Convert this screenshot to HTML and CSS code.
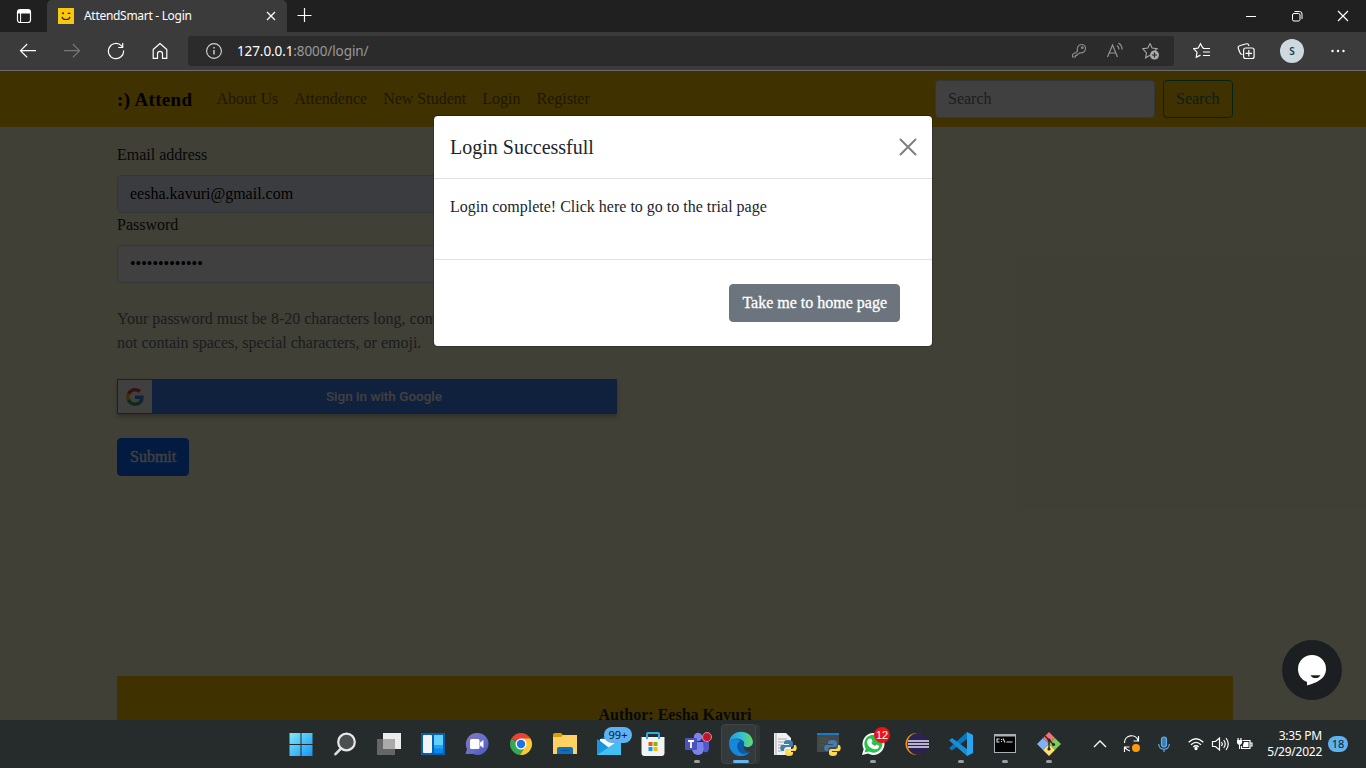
FILE: index.html
```html
<!DOCTYPE html>
<html lang="en">
<head>
<meta charset="utf-8">
<title>AttendSmart - Login</title>
<link rel="stylesheet" href="styles.css">
</head>
<body>
<div class="desktop">
  <header class="tabstrip">
    <div class="tab-actions"><svg width="16" height="16" viewBox="0 0 16 16"><rect x="1.5" y="1.5" width="13" height="13" rx="2.5" fill="none" stroke="#fff" stroke-width="1.2"/><path d="M2 2h12v3.500H2z" fill="#fff"/><path d="M4.600 5v9.500" stroke="#fff"/></svg></div>
    <div class="tab">
      <svg width="16" height="16" viewBox="0 0 16 16"><path d="M0 0h16v16H0z" fill="#f9c80e"/><circle cx="5" cy="5.300" r="1" fill="#302700"/><path d="M9.800 5.300h2.500M4 8.800c.8 3.600 7.200 3.600 8 0" fill="none" stroke="#302700" stroke-width="1.200"/></svg>
      <span class="tab-title">AttendSmart - Login</span>
      <svg class="tab-close" width="10" height="10" viewBox="0 0 10 10"><path d="M1 1l8 8M9 1L1 9" stroke="#fff" stroke-width="1.200"/></svg>
    </div>
    <svg class="new-tab" width="16" height="16" viewBox="0 0 16 16"><path d="M8.500 1v14M1.500 8.500h14" stroke="#fff" stroke-width="1.200"/></svg>
    <div class="window-buttons">
      <svg width="12" height="12" viewBox="0 0 12 12"><path d="M1 6.500h10" stroke="#fff"/></svg>
      <svg width="12" height="12" viewBox="0 0 12 12" fill="none" stroke="#fff"><rect x="1.500" y="3.500" width="7.500" height="7.500" rx="1.500"/><path d="M3.500 1.500h5q2.500 0 2.500 2.500v5"/></svg>
      <svg width="12" height="12" viewBox="0 0 12 12"><path d="M1 1l10 10M11 1L1 11" stroke="#fff" stroke-width="1.200"/></svg>
    </div>
  </header>
  <div class="toolbar">
    <div class="slots nav-slots">
      <svg width="18" height="18" viewBox="0 0 18 18" fill="none" stroke="#fff" stroke-width="1.200"><path d="M17 8.700H1.500M8.200 2L1.500 8.700l6.700 6.700"/></svg>
      <svg width="18" height="18" viewBox="0 0 18 18" fill="none" stroke="#777" stroke-width="1.200"><path d="M1 8.700h15.500M9.800 2l6.700 6.700-6.700 6.700"/></svg>
      <svg width="18" height="18" viewBox="0 0 18 18" fill="none" stroke="#fff" stroke-width="1.200"><path d="M16.600 8.500A7.600 7.600 0 1 1 14.500 3.800L15.500 5M15.700 1v4.500h-4.500"/></svg>
      <svg width="18" height="18" viewBox="0 0 18 18" fill="none" stroke="#fff" stroke-width="1.200" stroke-linejoin="round"><path d="M2.200 7.500L9 1.500l6.800 6v8.900h-4.300v-4.600a2.500 2.500 0 0 0-5 0v4.600H2.200z"/></svg>
    </div>
    <div class="address">
      <svg width="16" height="16" viewBox="0 0 16 16"><circle cx="8" cy="8" r="7.400" fill="none" stroke="#d5d5d5" stroke-width="1.100"/><path d="M8 7v4.500M8 4v1.500" stroke="#d5d5d5" stroke-width="1.400"/></svg>
      <span class="url"><b>127.0.0.1</b>:8000/login/</span>
      <div class="slots address-slots">
        <svg width="16" height="16" viewBox="0 0 16 16" fill="none" stroke="#8d8d8d" stroke-width="1.100"><path d="M6.500 8.200C5.500 4.500 7.500 1.500 10.500 1.500c2.500 0 4 1.700 4 4 0 3-2.800 4.900-5.500 4.200L7.500 11H6v1.500H4.500V14H1.500v-2.500z"/><circle cx="11.300" cy="4.700" r=".8"/></svg>
        <svg width="18" height="18" viewBox="0 0 18 18" fill="none" stroke="#949494" stroke-width="1.200"><path d="M1.500 15L6.500 3l5 12M3.200 11h6.600M11 3.500q2 1.500 2 4M12.500 1q3.500 2.200 3.700 6.500"/></svg>
        <svg width="18" height="18" viewBox="0 0 18 18"><path d="M8 1.500l2.100 4.600 5 .6-3.700 3.400M8 13.200l-4.400 2.600.9-5L.8 6.700l5-.6L8 1.500" fill="none" stroke="#a5a5a5" stroke-width="1.100"/><circle cx="12.500" cy="13" r="4.500" fill="#aaa"/><path d="M10 13h5M12.500 10.500v5" stroke="#2b2b2b" stroke-width="1.200"/></svg>
      </div>
    </div>
    <div class="slots action-slots">
      <svg width="18" height="18" viewBox="0 0 18 18" fill="none" stroke="#fff" stroke-width="1.200"><path d="M11 6H9.800L7.500 1.700 5.200 6l-4.500.8L4 10.200l-.7 5.100 4.200-2.200M10 6.500h7M10 10h7M10 13.500h7"/></svg>
      <svg width="18" height="18" viewBox="0 0 18 18" fill="none" stroke="#fff" stroke-width="1.200"><rect x="6.600" y="6" width="10.500" height="10.500" rx="2"/><path d="M11.800 8v6.500M8.500 11.300H15M12 4c-.5-2-1.300-2.700-3.500-2L3.300 3.500C1 4.100.8 5.200 1.500 7L3 10.800c.5 1.400 1.300 1.800 2.500 1.700"/></svg>
      <span class="avatar">S</span>
      <svg width="16" height="16" viewBox="0 0 16 16" fill="#fff"><circle cx="2.500" cy="8" r="1.200"/><circle cx="8" cy="8" r="1.200"/><circle cx="13.500" cy="8" r="1.200"/></svg>
    </div>
  </div>

  <main class="page">
    <nav class="navbar">
      <a class="brand">:) Attend</a>
      <a class="nav-link">About Us</a><a class="nav-link">Attendence</a><a class="nav-link">New Student</a><a class="nav-link">Login</a><a class="nav-link">Register</a>
      <div class="search"><div class="control search-field">Search</div><div class="btn btn-outline">Search</div></div>
    </nav>
    <section class="form">
      <div class="label">Email address</div>
      <div class="control autofill">eesha.kavuri@gmail.com</div>
      <div class="label">Password</div>
      <div class="control password">•••••••••••••</div>
      <p class="help">Your password must be 8-20 characters long, contain letters and numbers, and must<br>not contain spaces, special characters, or emoji.</p>
      <div class="google">
        <span class="google-logo"><svg width="18" height="18" viewBox="0 0 48 48"><path fill="#EA4335" d="M24 9.500c3.540 0 6.710 1.220 9.210 3.600l6.850-6.850C35.900 2.380 30.470 0 24 0 14.620 0 6.510 5.380 2.560 13.220l7.980 6.190C12.430 13.720 17.740 9.500 24 9.500z"/><path fill="#4285F4" d="M46.980 24.550c0-1.570-.15-3.090-.38-4.550H24v9.020h12.940c-.58 2.960-2.260 5.480-4.780 7.180l7.730 6c4.510-4.180 7.090-10.360 7.090-17.650z"/><path fill="#FBBC05" d="M10.530 28.590c-.48-1.450-.76-2.990-.76-4.590s.27-3.140.76-4.590l-7.980-6.190C.92 16.460 0 20.120 0 24c0 3.880.92 7.540 2.560 10.780l7.970-6.190z"/><path fill="#34A853" d="M24 48c6.480 0 11.930-2.130 15.890-5.810l-7.730-6c-2.150 1.450-4.920 2.300-8.160 2.300-6.260 0-11.570-4.220-13.470-9.910l-7.980 6.190C6.510 42.620 14.620 48 24 48z"/></svg></span>
        <span class="google-text">Sign in with Google</span>
      </div>
      <div class="btn btn-primary">Submit</div>
    </section>
    <footer class="footer">Author: Eesha Kavuri</footer>
    <div class="backdrop"></div>
    <div class="modal">
      <div class="modal-header"><span>Login Successfull</span><svg width="18" height="18" viewBox="0 0 18 18"><path d="M1.500 1.500l15 15M16.500 1.500l-15 15" stroke="#7f7f7f" stroke-width="2" stroke-linecap="round"/></svg></div>
      <div class="modal-body">Login complete! Click here to go to the trial page</div>
      <div class="modal-footer"><div class="btn btn-secondary">Take me to home page</div></div>
    </div>
    <div class="chat"><svg width="30" height="32" viewBox="0 0 30 32"><path d="M15 1a14 14 0 0 0-14 14c0 6 3.500 11 9 13v3.500c6-2 19-5 19-16.500A14 14 0 0 0 15 1z" fill="#fff"/><path d="M13.500 21.200h10c-2 3.800-8 3.800-10 0z" fill="#1c1f22"/></svg></div>
  </main>

  <div class="taskbar">
    <div class="apps">
      <div class="app"><svg width="24" height="24" viewBox="0 0 24 24"><defs><linearGradient id="win" x2="1" y2="1"><stop stop-color="#7fe9fd"/><stop offset="1" stop-color="#1595f5"/></linearGradient></defs><path d="M.5 1h11v11H.5zM12.500 1h11v11h-11zM.5 13h11v11H.5zM12.500 13h11v11h-11z" fill="url(#win)"/></svg></div>
      <div class="app"><svg width="24" height="24" viewBox="0 0 24 24"><path d="M8 16.500l-5.500 5.700" stroke="#ddd" stroke-width="2.600" stroke-linecap="round"/><circle cx="13.500" cy="10" r="8.300" fill="#4b4f50" stroke="#e8e8e8" stroke-width="2.200"/></svg></div>
      <div class="app"><svg width="24" height="24" viewBox="0 0 24 24"><path d="M6 1h18v16H6z" fill="#ececec"/><path d="M0 7h18v16H0z" fill="#666"/><path d="M6 7h12v10H6z" fill="#aaa"/></svg></div>
      <div class="app"><svg width="24" height="24" viewBox="0 0 24 24"><path d="M0 1h24v22H0z" fill="#0860ae"/><rect x="2" y="3" width="9" height="18" rx="1" fill="#f4f4f4"/><path d="M13 3h9v10h-9z" fill="#62cffd"/><path d="M13 13h9v8h-9z" fill="#0787ef"/><path d="M13 13h9v3.500h-9z" fill="#20a5f6"/></svg></div>
      <div class="app"><svg width="24" height="24" viewBox="0 0 24 24"><defs><linearGradient id="chat" x2="1" y2="1"><stop stop-color="#8c72b8"/><stop offset=".5" stop-color="#6672cd"/><stop offset="1" stop-color="#4d4fbf"/></linearGradient></defs><path d="M12 1a11 11 0 1 1-4 21H.5l1.500-5A11 11 0 0 1 12 1z" fill="url(#chat)"/><rect x="5" y="7" width="9.500" height="10" rx="1.500" fill="#fff"/><path d="M15 10.500l3.500-2.500v8L15 13.500z" fill="#fff"/></svg></div>
      <div class="app"><svg width="24" height="24" viewBox="0 0 24 24"><path d="M12 12L2.500 6.500A11 11 0 0 1 21.500 6.500z" fill="#ea4335"/><path d="M12 12h-1L2.500 6.500A11 11 0 0 0 11 23l5.500-8.500z" fill="#34a853"/><path d="M12 6.500h9.500A11 11 0 0 1 11 23l5-8z" fill="#fcc934"/><circle cx="12" cy="12" r="5.500" fill="#fff"/><circle cx="12" cy="12" r="4.200" fill="#1a73e8"/></svg></div>
      <div class="app"><svg width="24" height="24" viewBox="0 0 24 24"><path d="M0 3q0-2 2-2h6l2 2v4H0z" fill="#dc9b08"/><path d="M0 5h8l2-2h14v19H0z" fill="#fdd263"/><path d="M4 22v-5q0-2 2-2h12q2 0 2 2v5z" fill="#0f70b9"/><path d="M8 18.500h8" stroke="#08599d" stroke-width="1.200"/></svg></div>
      <div class="app"><svg width="24" height="24" viewBox="0 0 24 24"><path d="M0 9l12-7 12 7v14H0z" fill="#087dcb"/><path d="M3 7h18v2l-9 7-9-7z" fill="#fff"/><path d="M0 7l12 9L24 7v16H0z" fill="#1795df"/><path d="M0 23L24 7v16z" fill="#44bff1"/></svg><span class="pill">99+</span></div>
      <div class="app"><svg width="24" height="24" viewBox="0 0 24 24"><path d="M6 7V2q0-1 1-1h10q1 0 1 1v5" fill="none" stroke="#28b0e7" stroke-width="2"/><path d="M.500 5h23v16q0 3-3 3h-17q-3 0-3-3z" fill="#f3f3f3"/><path d="M7.500 10h4v4h-4z" fill="#f25022"/><path d="M12.500 10h4v4h-4z" fill="#7fba00"/><path d="M7.500 15h4v4h-4z" fill="#00a4ef"/><path d="M12.500 15h4v4h-4z" fill="#ffb900"/><path d="M6 5v2M18 5v2" stroke="#28b0e7" stroke-width="2"/></svg></div>
      <div class="app running"><svg width="24" height="24" viewBox="0 0 24 24"><circle cx="13" cy="5" r="4.200" fill="#7b83eb"/><circle cx="20" cy="7" r="3" fill="#5059c9"/><path d="M7 10h12v7a6 6 0 0 1-12 0z" fill="#7b83eb"/><path d="M18 10h6v6q0 5-5 4z" fill="#5059c9"/><rect y="6" width="12" height="12" rx="1" fill="#4b53bc"/><path d="M3 9h6M6 9v7" stroke="#fff" stroke-width="1.800"/></svg><i class="status"></i></div>
      <div class="app running active"><svg width="26" height="26" viewBox="0 0 24 24"><defs><linearGradient id="edge" x2="1"><stop stop-color="#209bdd"/><stop offset=".55" stop-color="#35c1d1"/><stop offset="1" stop-color="#6bdb58"/></linearGradient></defs><circle cx="12" cy="12" r="11" fill="#0c59a4"/><path d="M1 11C2-3 22-2 23 10c0 5-6 6-8.500 3.500 1-2 .5-5-3-6C7.500 6 3 7 1 11z" fill="url(#edge)"/><path d="M14.500 13.500c2.500 2.500 7 2 8.300-1 .4 2-.1 4.500-1.500 6.500-3 .8-7-1-6.800-5.500z" fill="#343939"/><path d="M1 11c3-5 8-4 10.500-2-4 2-4 8 0 11 3 2 7 1 9-1C14 27 1 23 1 11z" fill="#1787db"/></svg></div>
      <div class="app"><svg width="24" height="24" viewBox="0 0 24 24"><path d="M1 1h12l5 5v17H1z" fill="#f0f0f0"/><path d="M3 1v22M5 7h9M5 10h9M5 13h6M5 16h4M5 19h4" stroke="#aaa"/><use href="#py"/></svg></div>
      <div class="app"><svg width="24" height="24" viewBox="0 0 24 24"><path d="M0 1h22v19H0z" fill="#46494c"/><path d="M0 1h22v2H0z" fill="#1979cf"/><path d="M3 7h8M3 10h6M3 13h4" stroke="#39643f"/><g id="py"><path d="M15 8c-3 0-4 .8-4 3v1h5v1H9c-2 0-2.500 5.500 0 6h2c0-3 1-4 3-4h4c1.500 0 2-1 2-2v-2c0-2.200-2-3-5-3z" fill="#3e7fb2"/><path d="M16 24c3 0 4-.8 4-3v-1h-5v-1h7c2 0 2.500-5.500 0-6h-1c0 3-1 4-3 4h-4c-1.500 0-2 1-2 2v2c0 2.200 1 3 4 3z" fill="#ffd94f"/></g></svg></div>
      <div class="app running"><svg width="24" height="24" viewBox="0 0 24 24"><path d="M1 23l1.700-6A11 11 0 1 1 7 21.500z" fill="#fff"/><path d="M3.500 20.500l1.200-4A9 9 0 1 1 8 19.600z" fill="#27c44b"/><path d="M8.500 6.500l2 .2 1 2.700-1.200 1.400q1.200 2.300 3.800 3.200l1.400-1.600 2.700 1.300c0 6-10.500 4-12-2.700-.3-2 .8-4.300 2.300-4.500z" fill="#fff"/></svg><span class="count">12</span></div>
      <div class="app"><svg width="24" height="24" viewBox="0 0 24 24"><circle cx="11.500" cy="12" r="11" fill="#f7941e"/><circle cx="13.200" cy="12" r="11" fill="#252b2b"/><circle cx="13.500" cy="12" r="10.300" fill="#2c2255"/><path d="M3 9h21M3 12h21M3 15h21" stroke="#e5e5ee" stroke-width="1.700"/></svg></div>
      <div class="app running"><svg width="24" height="24" viewBox="0 0 24 24"><path d="M18 0l6 3v18l-6 3z" fill="#27a4f2"/><path d="M18 0v7L3 18.500l-3-2.300z" fill="#0877bd"/><path d="M18 24v-7L3 6 0 8.300z" fill="#158fd6"/></svg></div>
      <div class="app running"><svg width="24" height="24" viewBox="0 0 24 24"><path d="M1 2h22v19H1z" fill="#a8afb6"/><path d="M2 4.500h20V20H2z" fill="#050505"/><path d="M6.500 7H4v3h2.500M8.500 7v1M8.500 9v1M10 6.500l2 4M13.500 10h6" stroke="#ddd" stroke-width="1.100" fill="none"/></svg></div>
      <div class="app running"><svg width="24" height="24" viewBox="0 0 24 24"><path d="M12 0l6 6-6 6-6-6z" fill="#f37174"/><path d="M6 6l6 6-6 6-6-6z" fill="#7eb1f6"/><path d="M18 6l6 6-6 6-6-6z" fill="#80cb55"/><path d="M12 12l6 6-6 6-6-6z" fill="#fce172"/><path d="M8 4l4 4v9M12 8l5 5" stroke="#252b2b" stroke-width="1.400" fill="none"/><circle cx="12" cy="8" r="1.600" fill="#252b2b"/><circle cx="12" cy="17" r="1.600" fill="#252b2b"/><circle cx="16.500" cy="12.500" r="1.600" fill="#252b2b"/></svg></div>
    </div>
    <div class="tray">
      <svg width="14" height="14" viewBox="0 0 14 14"><path d="M1 10l6-6 6 6" fill="none" stroke="#fff" stroke-width="1.300"/></svg>
      <svg width="18" height="18" viewBox="0 0 18 18" fill="none" stroke="#fff" stroke-width="1.200"><path d="M1.500 8A7 7 0 0 1 15 5.200M15.500 1v5h-5M6.500 12h-5v5M2 12.500Q4 15.500 7 16"/><circle cx="13" cy="13" r="4" fill="#ff990f" stroke="none"/></svg>
      <svg width="16" height="16" viewBox="0 0 16 16" fill="none" stroke="#66aeea" stroke-width="1.200"><rect x="5.500" y="1" width="5" height="10" rx="2.500" fill="#397fb5"/><path d="M2.700 8c0 7 10.600 7 10.600 0M8 13v3"/></svg>
      <svg class="wifi" width="16" height="16" viewBox="0 0 16 16" fill="none" stroke="#fff" stroke-width="1.300"><path d="M.7 6.200q7.300-6.800 14.600 0M3 8.700q5-4.600 10 0M5.300 11q2.700-2.400 5.400 0"/><circle cx="8" cy="12.500" r="1" fill="#fff"/></svg>
      <svg width="18" height="16" viewBox="0 0 18 16" fill="none" stroke="#fff" stroke-width="1.200"><path d="M1.500 5.500h3L8.500 2v12l-4-3.500h-3zM10.500 6q1.500 2 0 4M12.700 4q3 4 0 8M15 2q4.500 6 0 12"/></svg>
      <svg class="battery" width="17" height="14" viewBox="0 0 17 14"><path d="M6.500 3.500H14v8H5.500V9M14.500 6h1.500v3h-1.500" fill="none" stroke="#fff" stroke-width="1.200"/><path d="M8 5h4.500v5H7V8zM1 3h5v3q-1 2-2.500 2T1 6zM1.500 1h1.200v2H1.500zM4.300 1h1.200v2H4.300z" fill="#fff"/><path d="M3.500 8v4" stroke="#fff"/></svg>
      <div class="clock"><div>3:35 PM</div><div>5/29/2022</div></div>
      <span class="notice">18</span>
    </div>
  </div>
</div>
</body>
</html>
```
FILE: styles.css
```css
* { box-sizing: border-box; }
body { margin: 0; font-family: "Liberation Serif", serif; font-size: 16px; line-height: 24px; color: #212529; }
svg { display: block; flex: none; }
.desktop { width: 1366px; height: 768px; display: flex; flex-direction: column; overflow: hidden; }

.tabstrip { height: 32px; flex: none; display: flex; background: #202020; font-family: "Noto Sans", sans-serif; }
.tab-actions { width: 47px; display: grid; place-items: center; }
.tab { width: 240px; display: flex; align-items: center; padding: 0 11px; background: #3b3b3b; border-radius: 5px 5px 0 0; color: #fff; }
.tab-title { margin-left: 10px; font-size: 12px; letter-spacing: -0.3px; white-space: nowrap; }
.tab-close { margin-left: auto; }
.new-tab { margin: 7px 0 0 9px; }
.window-buttons { margin-left: auto; display: flex; align-items: center; gap: 34px; padding-right: 17px; }

.toolbar { height: 39px; flex: none; display: flex; background: #3b3b3b; border-bottom: 1px solid #6b6b6b; padding: 4px 6px; font-family: "Noto Sans", sans-serif; }
.slots { display: flex; }
.slots > * { margin: 6px 13px; }
.address { width: 986px; height: 30px; flex: none; margin-left: 6px; padding: 0 5px 0 18px; display: flex; align-items: center; background: #2b2b2b; border-radius: 3px; }
.url { margin-left: 15px; font-size: 13.500px; letter-spacing: -0.1px; color: #999; }
.url b { font-weight: 400; color: #fff; }
.address-slots { margin-left: auto; }
.address-slots > * { margin: 6px 9px; }
.address-slots > :first-child { margin: 7px 10px; }
.action-slots { margin-left: 6px; }
.slots > .avatar { width: 24px; height: 24px; margin: 3px 11px 3px 12px; border-radius: 50%; background: #ced9df; color: #183f4b; font-size: 10px; font-weight: 600; text-align: center; }
.action-slots > :last-child { margin: 7px 15px; }

.page { height: 649px; flex: none; position: relative; display: flex; flex-direction: column; background: #fdfdd8; overflow: hidden; }
.navbar { height: 56px; flex: none; display: flex; align-items: center; padding: 0 133px 0 117px; background: #ffc107; }
.brand { width: 91.500px; font-size: 19px; font-weight: 700; color: #000; white-space: nowrap; padding-top: 2px; letter-spacing: 0.35px; }
.nav-link { padding: 0 8px; color: rgba(0, 0, 0, .55); }
.search { margin-left: auto; display: flex; gap: 8px; }
.control { height: 38px; padding: 6px 12px; border: 1px solid #ced4da; border-radius: 4px; background: #fff; color: #212529; }
.search-field { width: 220px; color: #6c757d; }
.btn { height: 38px; padding: 6px 12px; border: 1px solid; border-radius: 4px; white-space: nowrap; }
.btn-outline { width: 70px; color: #198754; }
.form { width: 500px; margin-left: 117px; padding-top: 16px; display: flex; flex-direction: column; }
.label { margin-bottom: 8px; }
.autofill { background: #e8f0fe; color: #000; }
.password { color: #000; }
.help { margin: 24px 0; color: #6c757d; white-space: nowrap; }
.google { height: 35px; padding: 1px; display: flex; background: #4285f4; box-shadow: 0 3px 4px rgba(0, 0, 0, .25); border-radius: 1px; }
.google-logo { width: 34px; display: grid; place-items: center; background: #fff; }
.google-text { flex: 1; text-align: center; font: 500 13.500px/33px Roboto, sans-serif; color: #fff; }
.btn-primary, .btn-secondary { color: #fff; -webkit-text-stroke: .3px #fff; }
.btn-primary { margin-top: 24px; align-self: flex-start; background: #0d6efd; border-color: #0d6efd; }
.footer { width: 1116px; height: 44px; margin: auto 0 0 117px; padding-top: 27px; line-height: 24px; flex: none; background: #ffc107; text-align: center; font-weight: 700; }
.backdrop { position: absolute; inset: 0; background: rgba(0, 0, 0, .75); }
.modal { position: absolute; left: 434px; top: 45px; width: 498px; height: 230px; background: #fff; border-radius: 4px; box-shadow: 0 0 0 1px rgba(0, 0, 0, .2); }
.modal-header { height: 63px; padding: 0 15px 0 16px; display: flex; align-items: center; justify-content: space-between; border-bottom: 1px solid #dee2e6; font-size: 20px; }
.modal-body { height: 80px; padding: 16px; }
.modal-footer { height: 87px; padding: 24px 32px; display: flex; justify-content: flex-end; border-top: 1px solid #dee2e6; }
.btn-secondary { background: #6c757d; border-color: #6c757d; }
.chat { position: absolute; right: 24px; bottom: 20px; width: 60px; height: 60px; border-radius: 50%; background: #1c1f22; display: grid; place-items: center; }

.taskbar { height: 48px; flex: none; display: flex; background: #262b2b; font-family: "Noto Sans", sans-serif; color: #fff; }
.apps { display: flex; margin-left: 279px; }
.app { position: relative; width: 44px; height: 48px; display: grid; place-items: center; }
.running::after { content: ""; position: absolute; left: 19px; bottom: 5px; width: 6px; height: 3px; border-radius: 2px; background: #9c9f9f; }
.active::before { content: ""; position: absolute; inset: 4px 7px 4px 2px; border: 1px solid #414545; border-radius: 4px; background: #343939; box-shadow: 4px 0 0 #303535; }
.active svg { position: relative; }
.active::after { left: 14px; width: 16px; background: #60b5f5; }
.pill { position: absolute; left: 17px; top: 7px; width: 28px; height: 16px; border-radius: 8px; background: #5eb2f2; color: #101820; font-size: 11px; line-height: 16px; text-align: center; }
.count { position: absolute; left: 23px; top: 7px; width: 16px; height: 16px; border-radius: 50%; background: #f01212; font: 11px/16px "Liberation Sans", sans-serif; text-align: center; }
.status { position: absolute; left: 27px; top: 12px; width: 10px; height: 10px; border: 1px solid #df8d9d; border-radius: 50%; background: #c4142b; }
.tray { margin-left: auto; padding-right: 18px; display: flex; align-items: center; }
.tray > svg + svg { margin-left: 16px; }
.tray > svg:nth-child(3) { margin-left: 15px; }
.tray > .wifi { margin-left: 16px; }
.tray > .wifi + svg { margin-left: 7px; }
.tray > .battery { margin-left: 7px; }
.clock { width: 69px; font-size: 12px; line-height: 16px; text-align: right; letter-spacing: -0.25px; white-space: nowrap; }
.notice { width: 20px; height: 16px; margin-left: 6px; border-radius: 8px; background: #5eb2f2; color: #101820; font-size: 11px; line-height: 16px; text-align: center; }
```
